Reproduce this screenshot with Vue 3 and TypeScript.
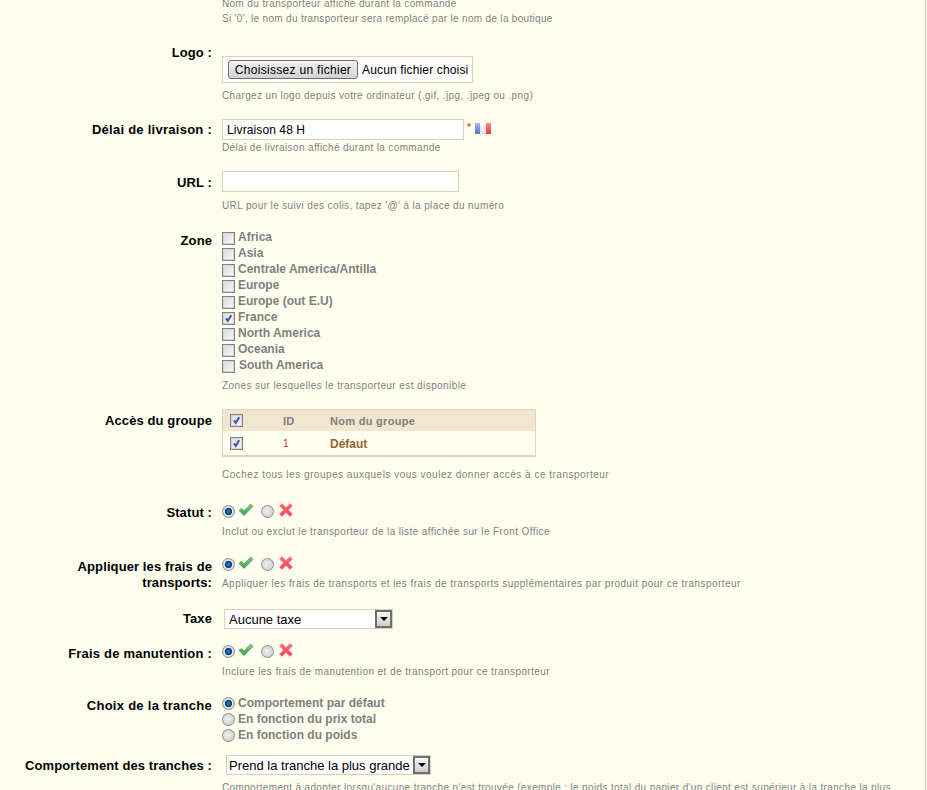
<script setup lang="ts">
const zones: { name: string; checked: boolean }[] = [
  { name: 'Africa', checked: false },
  { name: 'Asia', checked: false },
  { name: 'Centrale America/Antilla', checked: false },
  { name: 'Europe', checked: false },
  { name: 'Europe (out E.U)', checked: false },
  { name: 'France', checked: true },
  { name: 'North America', checked: false },
  { name: 'Oceania', checked: false },
  { name: 'South America', checked: false },
]
const ranges: { name: string; on: boolean }[] = [
  { name: 'Comportement par défaut', on: true },
  { name: 'En fonction du prix total', on: false },
  { name: 'En fonction du poids', on: false },
]
const checkPath = 'M1 8.6 L3.4 6.2 L6 8.8 L12.8 2 L15 4.4 L6 13.6 Z'
const crossPath = 'M1.5 4 L4 1.5 L8 5.5 L12 1.5 L14.5 4 L10.5 8 L14.5 12 L12 14.5 L8 10.5 L4 14.5 L1.5 12 L5.5 8 Z'
const tickPath = 'M3 5.4 L4.8 8 L8.2 2.2'
</script>

<template>
  <main class="page">
    <svg class="defs" width="0" height="0" aria-hidden="true">
      <defs>
        <linearGradient id="gk" x1="0" y1="0" x2="0" y2="1"><stop offset="0" stop-color="#7fd07a" /><stop offset="1" stop-color="#3f9f4a" /></linearGradient>
        <linearGradient id="rx" x1="0" y1="0" x2="0" y2="1"><stop offset="0" stop-color="#ff6f78" /><stop offset="1" stop-color="#f04050" /></linearGradient>
        <linearGradient id="fb" x1="0" y1="0" x2="0" y2="1"><stop offset="0" stop-color="#a8b8ea" /><stop offset="1" stop-color="#5570cc" /></linearGradient>
        <linearGradient id="fw" x1="0" y1="0" x2="0" y2="1"><stop offset="0" stop-color="#ffffff" /><stop offset="1" stop-color="#dfe0ea" /></linearGradient>
        <linearGradient id="fr" x1="0" y1="0" x2="0" y2="1"><stop offset="0" stop-color="#f59088" /><stop offset="1" stop-color="#e0392e" /></linearGradient>
      </defs>
    </svg>

    <div class="row r-name">
      <div></div>
      <div>
        <p class="hint">Nom du transporteur affiché durant la commande</p>
        <p class="hint sp-30">Si '0', le nom du transporteur sera remplacé par le nom de la boutique</p>
      </div>
    </div>

    <div class="row r-logo">
      <label class="lab">Logo :</label>
      <div class="f-logo">
        <div class="filebox">
          <button type="button" class="filebtn">Choisissez un fichier</button>
          <span class="filetxt">Aucun fichier choisi</span>
        </div>
        <p class="hint h-logo">Chargez un logo depuis votre ordinateur (.gif, .jpg, .jpeg ou .png)</p>
      </div>
    </div>

    <div class="row r-delay">
      <label class="lab l-delay">Délai de livraison :</label>
      <div>
        <div class="inline">
          <input class="txt w-delay" type="text" value="Livraison 48 H" />
          <sup class="req">*</sup>
          <svg class="flag" width="16" height="11" viewBox="0 0 16 11">
            <rect width="16" height="11" fill="url(#fw)" />
            <rect width="5" height="11" fill="url(#fb)" />
            <rect x="11" width="5" height="11" fill="url(#fr)" />
          </svg>
        </div>
        <p class="hint">Délai de livraison affiché durant la commande</p>
      </div>
    </div>

    <div class="row r-url">
      <label class="lab l-url">URL :</label>
      <div>
        <input class="txt w-url" type="text" />
        <p class="hint h-url">URL pour le suivi des colis, tapez '@' à la place du numéro</p>
      </div>
    </div>

    <div class="row r-zone">
      <label class="lab">Zone</label>
      <div>
        <div v-for="z in zones" :key="z.name" class="opt">
          <span class="cb" :class="{ on: z.checked }">
            <svg v-if="z.checked" width="11" height="11" viewBox="0 0 11 11"><path :d="tickPath" fill="none" stroke="#3f55a8" stroke-width="2" /></svg>
          </span>
          <span class="optname" :class="{ south: z.name === 'South America' }">{{ z.name }}</span>
        </div>
        <p class="hint h-zone">Zones sur lesquelles le transporteur est disponible</p>
      </div>
    </div>

    <div class="row r-group">
      <label class="lab">Accès du groupe</label>
      <div>
        <table class="tbl">
          <thead>
            <tr>
              <th class="c1"><span class="cb on"><svg width="11" height="11" viewBox="0 0 11 11"><path :d="tickPath" fill="none" stroke="#3f55a8" stroke-width="2" /></svg></span></th>
              <th class="c2">ID</th>
              <th class="c3">Nom du groupe</th>
            </tr>
          </thead>
          <tbody>
            <tr>
              <td class="c1"><span class="cb on"><svg width="11" height="11" viewBox="0 0 11 11"><path :d="tickPath" fill="none" stroke="#3f55a8" stroke-width="2" /></svg></span></td>
              <td class="c2 idv">1</td>
              <td class="c3 gname">Défaut</td>
            </tr>
          </tbody>
        </table>
        <p class="hint h-group">Cochez tous les groupes auxquels vous voulez donner accès à ce transporteur</p>
      </div>
    </div>

    <div class="row r-stat">
      <label class="lab l-tog">Statut :</label>
      <div>
        <div class="toggle">
          <span class="rd on"></span>
          <svg class="ico" width="16" height="16" viewBox="0 0 16 16"><path :d="checkPath" fill="url(#gk)" stroke="#3f8f48" stroke-width=".6" /></svg>
          <span class="rd"></span>
          <svg class="ico" width="16" height="16" viewBox="0 0 16 16"><path :d="crossPath" fill="url(#rx)" stroke="#f58a92" stroke-width=".7" /></svg>
        </div>
        <p class="hint sp-40">Inclut ou exclut le transporteur de la liste affichée sur le Front Office</p>
      </div>
    </div>

    <div class="row r-ship">
      <label class="lab l-ship">Appliquer les frais de<br />transports:</label>
      <div>
        <div class="toggle">
          <span class="rd on"></span>
          <svg class="ico" width="16" height="16" viewBox="0 0 16 16"><path :d="checkPath" fill="url(#gk)" stroke="#3f8f48" stroke-width=".6" /></svg>
          <span class="rd"></span>
          <svg class="ico" width="16" height="16" viewBox="0 0 16 16"><path :d="crossPath" fill="url(#rx)" stroke="#f58a92" stroke-width=".7" /></svg>
        </div>
        <p class="hint h-tog2">Appliquer les frais de transports et les frais de transports supplémentaires par produit pour ce transporteur</p>
      </div>
    </div>

    <div class="row r-tax">
      <label class="lab">Taxe</label>
      <div class="sel s-tax">
        <span class="seltxt">Aucune taxe</span>
        <span class="selbtn"><i class="arrow"></i></span>
      </div>
    </div>

    <div class="row r-hand">
      <label class="lab l-hand">Frais de manutention :</label>
      <div>
        <div class="toggle">
          <span class="rd on"></span>
          <svg class="ico" width="16" height="16" viewBox="0 0 16 16"><path :d="checkPath" fill="url(#gk)" stroke="#3f8f48" stroke-width=".6" /></svg>
          <span class="rd"></span>
          <svg class="ico" width="16" height="16" viewBox="0 0 16 16"><path :d="crossPath" fill="url(#rx)" stroke="#f58a92" stroke-width=".7" /></svg>
        </div>
        <p class="hint sp-41">Inclure les frais de manutention et de transport pour ce transporteur</p>
      </div>
    </div>

    <div class="row r-range">
      <label class="lab l-range">Choix de la tranche</label>
      <div>
        <div v-for="r in ranges" :key="r.name" class="opt">
          <span class="rd" :class="{ on: r.on }"></span>
          <span class="optname">{{ r.name }}</span>
        </div>
      </div>
    </div>

    <div class="row r-beh">
      <label class="lab">Comportement des tranches :</label>
      <div>
        <div class="sel s-beh">
          <span class="seltxt">Prend la tranche la plus grande</span>
          <span class="selbtn"><i class="arrow"></i></span>
        </div>
        <p class="hint h-beh">Comportement à adopter lorsqu'aucune tranche n'est trouvée (exemple : le poids total du panier d'un client est supérieur à la tranche la plus</p>
      </div>
    </div>
  </main>
</template>

<style>
html, body { margin: 0; background: #fffff0; height: 790px; overflow: hidden; }
</style>

<style scoped>
.page {
  width: 926px;
  height: 794px;
  box-sizing: border-box;
  margin-top: -4px;
  border-right: 1px solid #d0cdc0;
  background: #fffff0;
  font-family: "Liberation Sans", Arial, sans-serif;
  overflow: hidden;
}
.defs { display: block; height: 0; }
.row { display: grid; grid-template-columns: 212px 1fr; column-gap: 10px; }
.lab {
  font-size: 13px;
  font-weight: bold;
  line-height: 16px;
  letter-spacing: .1px;
  color: #000;
  text-align: right;
}
.hint {
  margin: 0;
  font-size: 10px;
  line-height: 15px;
  color: #7f7f7f;
  letter-spacing: .37px;
  white-space: nowrap;
}
.sp-30 { letter-spacing: .31px; }
.sp-40 { letter-spacing: .4px; }
.sp-41 { letter-spacing: .42px; }
.r-logo { margin-top: 19px; }
.f-logo { padding-top: 11px; }
.filebox {
  width: 251px;
  height: 27px;
  box-sizing: border-box;
  border: 1px solid #e0d0b1;
  background: #fff;
  display: flex;
  align-items: center;
  padding-left: 5px;
  white-space: nowrap;
}
.filebtn {
  width: 130px;
  height: 19px;
  padding: 0;
  font: 12px "Liberation Sans", Arial, sans-serif;
  letter-spacing: .3px;
  color: #000;
  background: linear-gradient(#f2f2f2, #d2d2d2);
  border: 1px solid #6e6e6e;
  border-radius: 3px;
}
.filetxt { margin-left: 4px; font-size: 12px; letter-spacing: .15px; color: #000; }
.h-logo { margin-top: 5px; letter-spacing: .37px; }

.r-delay { margin-top: 16px; }
.l-delay { margin-top: 3px; letter-spacing: .26px; }
.inline { display: flex; align-items: flex-start; }
.txt {
  display: block;
  height: 21px;
  box-sizing: border-box;
  border: 1px solid #e0d0b1;
  background: #fff;
  padding: 0 4px;
  font: 12px "Liberation Sans", Arial, sans-serif;
  letter-spacing: .1px;
  color: #000;
  outline: none;
}
.w-delay { width: 242px; }
.w-url { width: 237px; }
.req { color: #d02000; font-size: 10px; line-height: 10px; margin: 4px 0 0 3px; vertical-align: baseline; }
.flag { margin: 4px 0 0 4px; }

.r-url { margin-top: 16px; }
.l-url { margin-top: 4px; }
.h-url { margin-top: 6px; }

.r-zone { margin-top: 16px; }
.r-zone .lab { margin-top: 4px; }
.opt { display: flex; height: 16px; align-items: flex-start; }
.optname { margin-left: 3px; font-size: 12px; font-weight: bold; line-height: 16px; color: #7f7f7f; white-space: nowrap; }
.optname.south { margin-left: 4px; }
.cb {
  display: inline-block;
  flex: none;
  width: 13px;
  height: 13px;
  box-sizing: border-box;
  margin-top: 3px;
  border: 1px solid #808488;
  box-shadow: inset 0 0 0 1px #d2d4d8;
  background: linear-gradient(135deg, #d8d8d8, #fbfbf9);
  font-size: 0;
  vertical-align: top;
}
.cb svg { display: block; }
.h-zone { margin-top: 5px; letter-spacing: .42px; }

.r-group { margin-top: 16px; }
.r-group .lab { margin-top: 4px; }
.tbl {
  width: 314px;
  border-collapse: collapse;
  border: 1px solid #dfd5c3;
  border-bottom-width: 2px;
  font-size: 11px;
  background: #fffff0;
}
.tbl th { height: 21px; padding: 0; background: #f3e6ce; text-align: left; color: #7f7f7f; font-weight: bold; letter-spacing: .3px; }
.tbl td { height: 23px; padding: 1px 0 0; }
.tbl .cb { margin: 0 0 0 7px; display: block; }
.c1 { width: 60px; }
.c2 { width: 47px; }
.idv { color: #a8402d; font-size: 10px; }
.tbl td.idv { color: #b03a2a; }
.gname { color: #996633; font-size: 12px; font-weight: bold; }
.h-group { margin-top: 10px; letter-spacing: .5px; }

.r-stat { margin-top: 22px; }
.l-tog { margin-top: 1px; }
.toggle { display: flex; align-items: flex-start; height: 20px; }
.rd {
  display: inline-block;
  flex: none;
  width: 13px;
  height: 13px;
  box-sizing: border-box;
  margin-top: 1px;
  border-radius: 50%;
  border: 1px solid #8e8e8e;
  background: radial-gradient(circle at 45% 45%, #f0f0f0, #d2d2d2 70%, #b8b8b8);
}
.rd.on { background: radial-gradient(circle, #2a8ccc 0, #0a5a92 28%, #0b3f70 42%, #dfe4e8 52%, #c8c8c8 100%); }
.opt .rd { margin-top: 2px; }
.toggle .rd + .ico { margin-left: 3px; margin-top: -2px; }
.toggle .rd + .ico + .rd { margin-left: 7px; }
.toggle .rd + .ico + .rd + .ico { margin-left: 4px; }
.r-ship { margin-top: 18px; }
.l-ship { margin-top: 2px; }
.h-tog2 { margin-top: -1px; letter-spacing: .45px; }

.r-tax { margin-top: 18px; align-items: center; }
.sel {
  display: flex;
  align-items: center;
  justify-content: space-between;
  height: 20px;
  box-sizing: border-box;
  border: 1px solid #e0d0b1;
  background: #fff;
  font-size: 13px;
  color: #000;
}
.s-tax { width: 169px; margin-left: 2px; }
.s-beh { width: 205px; margin-left: 4px; }
.s-beh .seltxt { padding-left: 2px; }
.seltxt { padding-left: 4px; white-space: nowrap; }
.selbtn {
  display: flex;
  align-items: center;
  justify-content: center;
  flex: none;
  width: 17px;
  height: 18px;
  margin-right: 0;
  box-sizing: border-box;
  border: 2px solid #6f6f6f;
  background: linear-gradient(#f8f8f8, #cccccc);
}
.arrow {
  display: block;
  width: 0;
  height: 0;
  border-left: 4px solid transparent;
  border-right: 4px solid transparent;
  border-top: 4px solid #000;
}

.r-hand { margin-top: 15px; }
.l-hand { margin-top: 2px; letter-spacing: .2px; }
.r-range { margin-top: 16px; }
.l-range { letter-spacing: .28px; }
.r-range .lab { margin-top: 3px; }
.r-beh { margin-top: 12px; }
.r-beh .lab { margin-top: 3px; }
.h-beh { margin-top: 5px; letter-spacing: .35px; }
</style>
